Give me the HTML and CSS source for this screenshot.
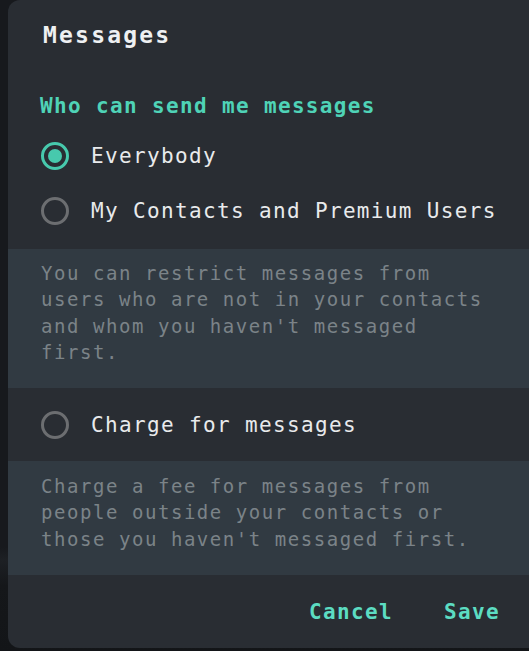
FILE: index.html
```html
<!DOCTYPE html>
<html>
<head>
<meta charset="utf-8">
<link rel="stylesheet" href="styles.css">
</head>
<body>
<div class="dialog">
  <div class="header">Messages</div>
  <div class="section-title">Who can send me messages</div>
  <div class="radio-row"><span class="radio checked"></span><span class="label">Everybody</span></div>
  <div class="radio-row"><span class="radio"></span><span class="label">My Contacts and Premium Users</span></div>
  <div class="desc desc-first">You can restrict messages from users who are not in your contacts and whom you haven't messaged first.</div>
  <div class="radio-row charge"><span class="radio"></span><span class="label">Charge for messages</span></div>
  <div class="desc desc-second">Charge a fee for messages from people outside your contacts or those you haven't messaged first.</div>
  <div class="footer">
    <button class="btn">Cancel</button>
    <button class="btn">Save</button>
  </div>
</div>
</body>
</html>
```
FILE: styles.css
```css
html, body {
  margin: 0;
  padding: 0;
  height: 100%;
  overflow: hidden;
}
body {
  background: linear-gradient(to bottom, #17191d 0%, #17191d 84%, #1d2024 86%, #15171a 90%, #131518 100%);
  font-family: "DejaVu Sans Mono", "Liberation Mono", monospace;
  color: #e4e6e8;
}
.dialog {
  margin-left: 8px;
  height: 648px;
  background: #292d33;
  border-radius: 12px 0 0 12px;
  display: flex;
  flex-direction: column;
  overflow: hidden;
}
.header {
  height: 70px;
  display: flex;
  align-items: center;
  padding-left: 35px;
  padding-bottom: 1px;
  box-sizing: border-box;
  font-size: 23px;
  font-weight: bold;
  letter-spacing: 2.2px;
  color: #eef0f2;
}
.section-title {
  height: 26px;
  display: flex;
  align-items: center;
  margin-top: 23px;
  padding-left: 32px;
  font-size: 21px;
  font-weight: bold;
  letter-spacing: 1.35px;
  color: #4fd3b7;
}
.radio-row {
  height: 55px;
  display: flex;
  align-items: center;
  padding-left: 33px;
  gap: 22px;
}
.section-title + .radio-row {
  margin-top: 9px;
}
.radio {
  width: 28px;
  height: 28px;
  box-sizing: border-box;
  border: 3px solid #6c6e71;
  border-radius: 50%;
  display: flex;
  align-items: center;
  justify-content: center;
  flex: none;
}
.radio.checked {
  border-color: #47c9ad;
}
.radio.checked::after {
  content: "";
  width: 14px;
  height: 14px;
  border-radius: 50%;
  background: #47c9ad;
}
.label {
  font-size: 21px;
  letter-spacing: 1.35px;
  color: #e8eaec;
}
.desc {
  background: #313a42;
  padding: 11px 33px 23px 33px;
  font-size: 19px;
  letter-spacing: 1.55px;
  line-height: 26.3px;
  color: #7b8388;
}
.desc-first {
  margin-top: 11px;
}
.radio-row.charge {
  height: 73px;
}
.desc-second {
  padding-top: 12px;
}
.footer {
  flex: 1;
  display: flex;
  justify-content: flex-end;
  align-items: center;
  gap: 51px;
  padding-right: 29px;
  padding-top: 1px;
}
.btn {
  background: none;
  border: none;
  padding: 0;
  font-family: inherit;
  font-size: 21px;
  font-weight: bold;
  letter-spacing: 1.35px;
  color: #5cdcc2;
}
```
